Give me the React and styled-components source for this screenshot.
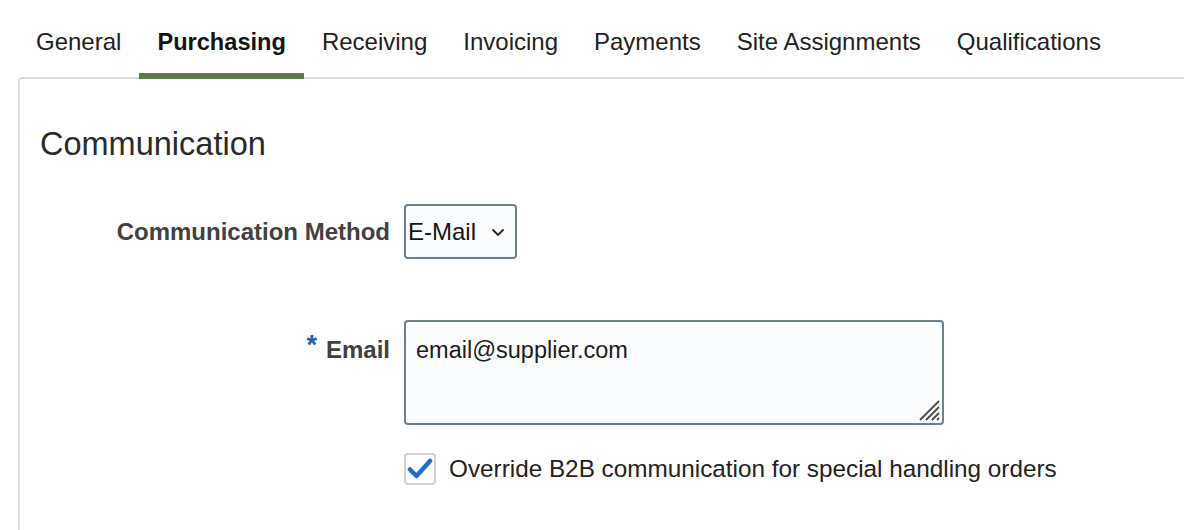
import styled, { createGlobalStyle } from "styled-components";

const GlobalStyle = createGlobalStyle`
    * {
        box-sizing: border-box;
    }

    body {
        margin: 0;
        background: #ffffff;
        font-family: "Liberation Sans", Arial, Helvetica, sans-serif;
        color: #1f1f1f;
    }
`;

const Page = styled.div`
    height: 530px;
    overflow: hidden;
    display: flex;
    flex-direction: column;
`;

const TabBar = styled.div`
    display: flex;
    padding-left: 18px;
    margin-bottom: -2px;
    position: relative;
    z-index: 1;
`;

const Tab = styled.div`
    height: 79px;
    padding: 28px 18px 0;
    font-size: ${(p) => (p.$active ? "23.6px" : "24px")};
    line-height: 28px;
    font-weight: ${(p) => (p.$active ? 700 : 400)};
    color: ${(p) => (p.$active ? "#141414" : "#222222")};
    border-bottom: 6px solid ${(p) => (p.$active ? "#5a7a4a" : "transparent")};
    white-space: nowrap;
`;

const Panel = styled.div`
    flex: 1;
    margin-left: 18px;
    border-top: 2px solid #d4dee5;
    border-left: 2px solid #d4dee5;
    border-top-left-radius: 4px;
    padding: 46px 20px 0 20px;
`;

const Heading = styled.h2`
    margin: 0;
    font-size: 32.5px;
    line-height: 38px;
    font-weight: 400;
    color: #2b2b2b;
`;

const Form = styled.div`
    display: grid;
    grid-template-columns: 350px 1fr;
    column-gap: 14px;
    margin-top: 41px;
`;

const Label = styled.div`
    display: flex;
    justify-content: flex-end;
    align-items: ${(p) => (p.$top ? "flex-start" : "center")};
    padding-top: ${(p) => (p.$top ? "16px" : "0")};
    margin-top: ${(p) => p.$offset || 0}px;
    font-size: 24px;
    line-height: 28px;
    font-weight: 700;
    color: #414141;
    white-space: nowrap;
`;

const Required = styled.span`
    color: #1d5fa8;
    font-size: 27px;
    font-weight: 700;
    margin-right: 9px;
    position: relative;
    top: -5px;
`;

const Field = styled.div`
    display: flex;
    align-items: center;
    margin-top: ${(p) => p.$offset || 0}px;
`;

const Select = styled.div`
    width: 113px;
    height: 55px;
    display: flex;
    align-items: center;
    justify-content: space-between;
    padding: 0 10px 0 2px;
    border: 2px solid #6e808c;
    border-radius: 4px;
    background: #fbfcfd;
    font-size: 24px;
    color: #161616;
`;

const TextArea = styled.div`
    width: 540px;
    height: 105px;
    position: relative;
    padding: 14px 10px;
    border: 2px solid #6e808c;
    border-radius: 4px;
    background: #fbfcfd;
    font-size: 23.5px;
    line-height: 28px;
    color: #1c1c1c;
`;

const Grip = styled.svg`
    position: absolute;
    right: 1px;
    bottom: 1px;
`;

const CheckRow = styled.label`
    display: flex;
    align-items: center;
    gap: 13px;
    font-size: 24.3px;
    color: #222222;
    white-space: nowrap;
`;

const CheckBox = styled.span`
    width: 32px;
    height: 32px;
    display: flex;
    align-items: center;
    justify-content: center;
    border: 2px solid #cdd2d6;
    border-radius: 4px;
    background: #ffffff;
`;

const tabs = [
    "General",
    "Purchasing",
    "Receiving",
    "Invoicing",
    "Payments",
    "Site Assignments",
    "Qualifications",
];

export default function App() {
    return (
        <Page>
            <GlobalStyle />
            <TabBar>
                {tabs.map((t) => (
                    <Tab key={t} $active={t === "Purchasing"}>
                        {t}
                    </Tab>
                ))}
            </TabBar>
            <Panel>
                <Heading>Communication</Heading>
                <Form>
                    <Label>Communication Method</Label>
                    <Field>
                        <Select>
                            <span>E-Mail</span>
                            <svg width="14" height="10" viewBox="0 0 14 10">
                                <path
                                    d="M2 3 L7 8 L12 3"
                                    fill="none"
                                    stroke="#222"
                                    strokeWidth="1.8"
                                    strokeLinecap="round"
                                />
                            </svg>
                        </Select>
                    </Field>

                    <Label $top $offset={61}>
                        <Required>*</Required>Email
                    </Label>
                    <Field $offset={61}>
                        <TextArea>
                            email@supplier.com
                            <Grip width="24" height="24" viewBox="0 0 24 24">
                                <path
                                    d="M22 3 L3 22 M22 9 L9 22 M22 15 L15 22 M22 20 L20 22"
                                    stroke="#4a4a4a"
                                    strokeWidth="1.8"
                                />
                            </Grip>
                        </TextArea>
                    </Field>

                    <span />
                    <Field $offset={28}>
                        <CheckRow>
                            <CheckBox>
                                <svg width="26" height="24" viewBox="0 0 26 24">
                                    <path
                                        d="M3 12.5 L9.5 19 L23 4"
                                        fill="none"
                                        stroke="#1f6fc5"
                                        strokeWidth="4.5"
                                        strokeLinecap="round"
                                        strokeLinejoin="round"
                                    />
                                </svg>
                            </CheckBox>
                            Override B2B communication for special handling orders
                        </CheckRow>
                    </Field>
                </Form>
            </Panel>
        </Page>
    );
}
